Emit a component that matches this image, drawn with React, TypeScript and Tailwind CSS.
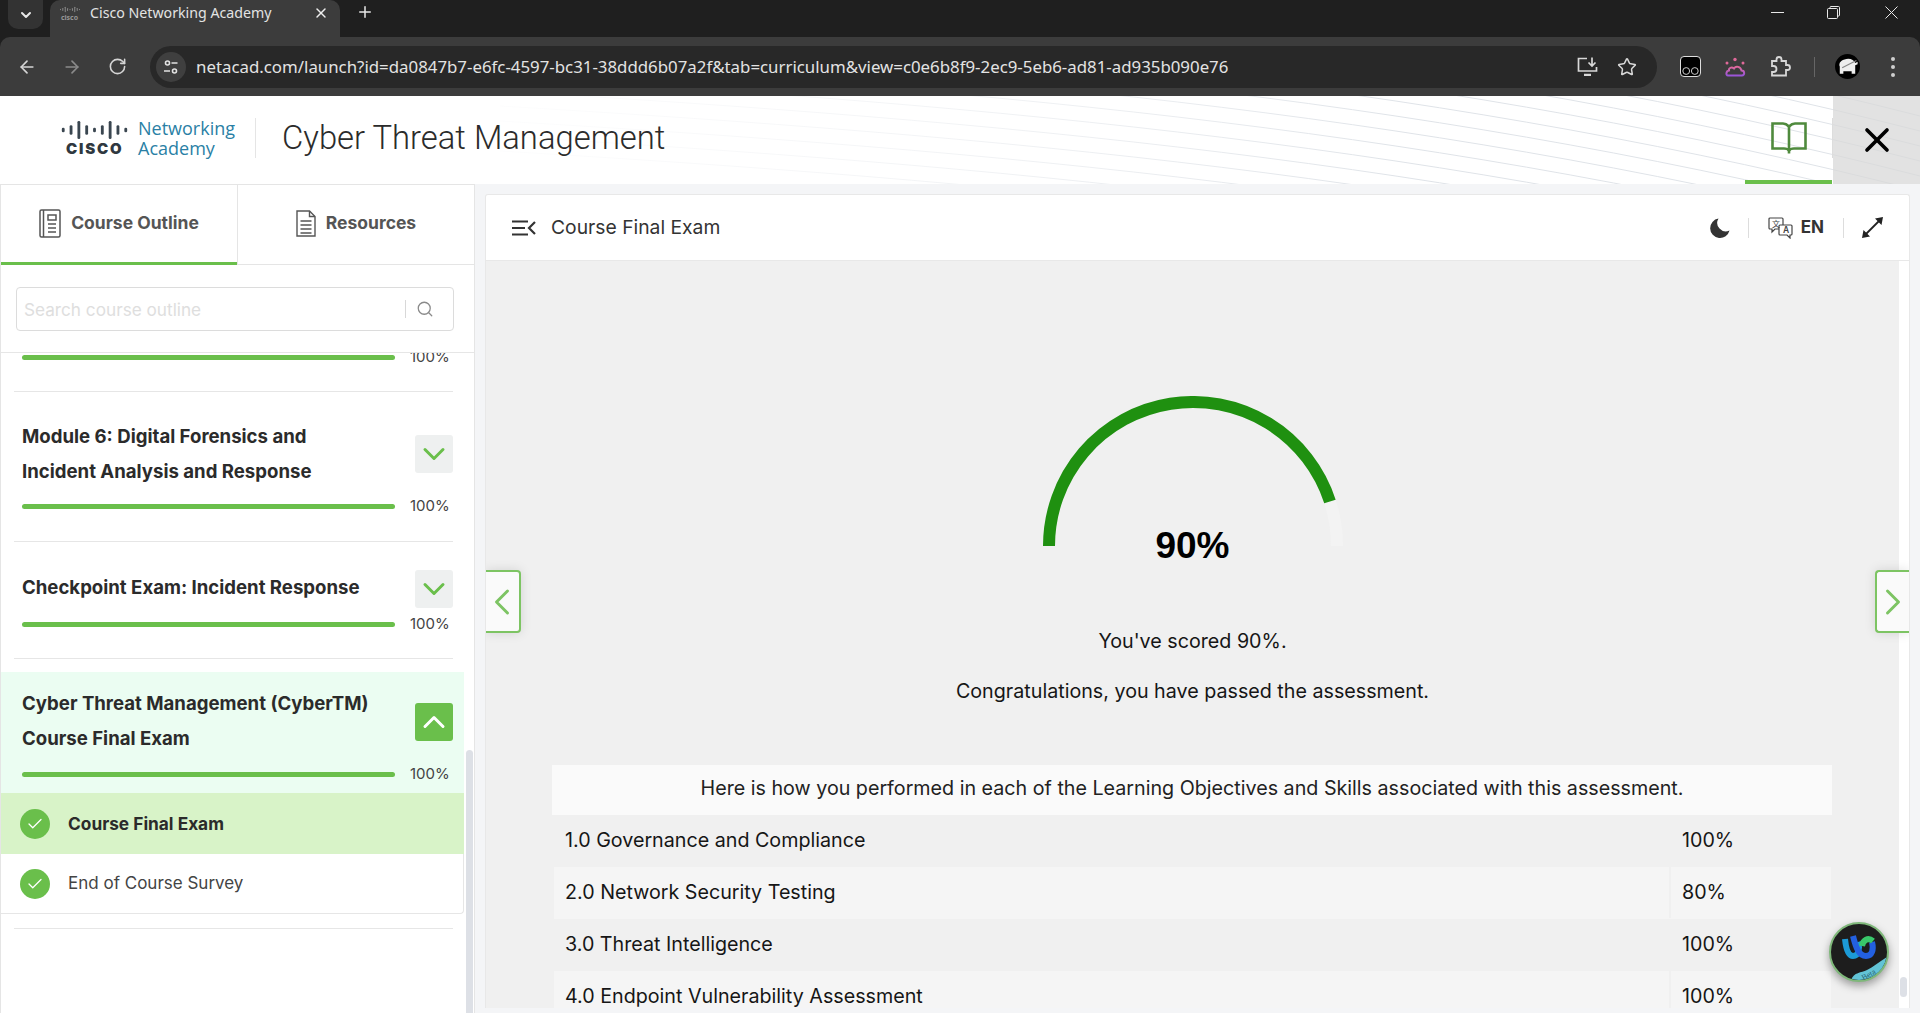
import React from "react";
import { ArrowLeft, ArrowRight, RotateCw, Star, X, Plus, ChevronDown, ChevronUp, ChevronLeft, ChevronRight, Search, Check } from "lucide-react";

function CiscoBars({ className, color }: { className: string; color: string }) {
  const h = [5, 10, 19, 10, 5, 10, 19, 10, 5];
  return (
    <svg className={className} viewBox="0 0 69 19" fill={color}>
      {[0, 8.25, 16.5, 24.75, 33, 41.25, 49.5, 57.75, 66].map((x, i) => (
        <rect key={i} x={x} y={(19 - h[i]) / 2} width="3" height={h[i]} rx="1.4" />
      ))}
    </svg>
  );
}

function OutlineIcon() {
  return (
    <svg width="22" height="29" viewBox="0 0 22 29" fill="none" stroke="#555" strokeWidth="1.5">
      <rect x="1" y="1" width="20" height="27" rx="1.5" />
      <path d="M4.5 1v27" />
      <rect x="9" y="6" width="8" height="5" />
      <path d="M9 15h8M9 19h8M9 23h8" />
    </svg>
  );
}

function ResourceIcon() {
  return (
    <svg width="20" height="27" viewBox="0 0 20 27" fill="none" stroke="#555" strokeWidth="1.4">
      <path d="M1 1h12.5L19 6.5V26H1z" />
      <path d="M13.5 1v5.5H19" />
      <path d="M4.5 11h11M4.5 15h11M4.5 19h11M4.5 23h11" />
    </svg>
  );
}

function BookIcon() {
  return (
    <svg width="36" height="32" viewBox="0 0 36 32" fill="none" stroke="#4f8a3d" strokeWidth="2.6">
      <path d="M18 4.500C16 2.500 14 1.500 12 1.500H1.500v25H13c2 0 4 .5 5 2 1-1.500 3-2 5-2h11.500v-25H24c-2 0-4 1-6 3z" />
      <path d="M18 4.500V31.500" />
    </svg>
  );
}

function Gauge() {
  return (
    <div className="relative mx-auto h-[150px] w-[300px]">
      <svg width="300" height="150" viewBox="0 0 300 150" fill="none" strokeWidth="12">
        <path d="M286.95 105.500A144 144 0 0 1 294 150" stroke="#f3f3f3" />
        <path d="M6 150A144 144 0 0 1 286.950 105.500" stroke="#1f9010" />
      </svg>
      <div className="absolute left-0 right-0 top-[132px] text-center font-['Liberation_Sans'] text-[37px] font-bold leading-[36px] text-black">90%</div>
    </div>
  );
}

function Bar({ pct, cls }: { pct: string; cls: string }) {
  return (
    <div className={"flex items-center " + cls}>
      <div className="ml-[21px] h-[5px] w-[373px] rounded-full bg-[#6abf4b]" />
      <span className="ml-[15px] text-[15px] leading-[20px] text-[#444]">{pct}</span>
    </div>
  );
}

function Toggle({ open }: { open?: boolean }) {
  return (
    <div className={"flex h-[38px] w-[38px] items-center justify-center rounded-[3px] " + (open ? "bg-[#6abf4b]" : "bg-[#eef0f0]")}>
      {open ? <ChevronUp size={36} color="#fff" strokeWidth={2} /> : <ChevronDown size={36} color="#6abf4b" strokeWidth={2} />}
    </div>
  );
}

function Title({ lines }: { lines: string[] }) {
  return (
    <div className="ml-[21px] text-[18.600px] font-bold leading-[35px] text-[#2b2b2b]">
      {lines.map((l) => (
        <div key={l}>{l}</div>
      ))}
    </div>
  );
}

function Divider() {
  return <div className="ml-[13px] h-px w-[439px] bg-[#e6e6e6]" />;
}

function CheckDot() {
  return (
    <div className="ml-[19px] flex h-[30px] w-[30px] items-center justify-center rounded-full bg-[#6abf4b]">
      <Check size={18} color="#fff" strokeWidth={1.7} />
    </div>
  );
}

function Row({ name, val, shade, cellLine }: { name: string; val: string; shade?: boolean; cellLine?: boolean }) {
  return (
    <div className={"flex h-[52px] w-[1277px] items-center pb-[2px] text-[19.700px] leading-[30px] text-[#161616] " + (shade ? "ml-[2px] bg-[#f5f5f5]" : "ml-[2px]")}>
      <div className="ml-[11px] w-[1104px]">{name}</div>
      <div className={"flex h-[52px] items-center pl-[11px] " + (cellLine ? "border-l-2 border-[#f0f0f0]" : "border-l-2 border-transparent")}>{val}</div>
    </div>
  );
}

export default function App() {
  const url = "netacad.com/launch?id=da0847b7-e6fc-4597-bc31-38ddd6b07a2f&tab=curriculum&view=c0e6b8f9-2ec9-5eb6-ad81-ad935b090e76";
  const waves = [-170, -155, -140, -125, -110, -95, -80, -65, -50, -35, -20, -5, 10, 25, 40, 55];
  return (
    <div className="flex h-[1013px] w-[1920px] flex-col overflow-hidden bg-[#1f1f1f] font-['Inter',sans-serif]">
      {/* tab strip */}
      <div className="flex h-[37px] shrink-0 items-start font-['Noto_Sans',sans-serif] text-[#e8e8e8]">
        <div className="ml-[8px] flex h-[29px] w-[35px] items-center justify-center rounded-b-[10px] bg-[#333]">
          <ChevronDown size={16} color="#e8e8e8" strokeWidth={3} />
        </div>
        <div className="ml-[7px] flex h-[37px] w-[290px] items-center rounded-t-[10px] bg-[#3c3c3c] pb-[11px]">
          <div className="ml-[9px] flex w-[21px] flex-col items-center opacity-70">
            <CiscoBars className="h-[9px] w-[20px]" color="#bbb" />
            <span className="text-[7px] font-bold leading-[7px] text-[#bbb]">cisco</span>
          </div>
          <span className="ml-[10px] w-[224px] text-[14.200px] leading-[20px] text-[#e3e3e3]">Cisco Networking Academy</span>
          <X size={16} color="#eee" strokeWidth={2.2} className="-ml-[1px]" />
        </div>
        <Plus size={18} color="#e8e8e8" strokeWidth={2} className="ml-[16px] mt-[3px]" />
        <div className="ml-auto flex h-[24px] items-center">
          <div className="mr-[43px] h-px w-[13px] bg-[#e8e8e8]" />
          <svg className="mr-[45px]" width="13" height="13" viewBox="0 0 13 13" fill="none" stroke="#e8e8e8" strokeWidth="1">
            <rect x="0.5" y="2.500" width="10" height="10" rx="1" />
            <path d="M3 2.500V1.500a1 1 0 0 1 1-1h7.500a1 1 0 0 1 1 1V9a1 1 0 0 1-1 1h-1" />
          </svg>
          <svg className="mr-[22px]" width="13" height="13" viewBox="0 0 13 13" fill="none" stroke="#e8e8e8" strokeWidth="1">
            <path d="M0.5 0.500L12.500 12.500M12.500 0.500L0.500 12.500" />
          </svg>
        </div>
      </div>

      {/* toolbar */}
      <div className="flex h-[59px] shrink-0 items-center rounded-t-[10px] bg-[#3c3c3c]">
        <ArrowLeft size={20} color="#d5d5d5" strokeWidth={2} className="ml-[17px]" />
        <ArrowRight size={20} color="#8a8a8a" strokeWidth={2} className="ml-[25px]" />
        <RotateCw size={19} color="#d5d5d5" strokeWidth={2} className="ml-[26px]" />
        <div className="ml-[23px] flex h-[42px] w-[1507px] items-center rounded-full bg-[#282828]">
          <div className="ml-[6px] flex h-[30px] w-[30px] items-center justify-center rounded-full bg-[#3f3f3f]">
            <svg width="16" height="16" viewBox="0 0 16 16" fill="none" stroke="#e3e3e3" strokeWidth="1.6">
              <circle cx="4.500" cy="4" r="2" />
              <path d="M8.500 4h6M1 12h6" />
              <circle cx="11.500" cy="12" r="2" />
            </svg>
          </div>
          <span className="ml-[10px] whitespace-nowrap font-['Noto_Sans',sans-serif] text-[16.840px] leading-[22px] text-[#e3e3e3]">{url}</span>
          <svg className="ml-auto" width="21" height="19" viewBox="0 0 21 19" fill="none" stroke="#d8d8d8" strokeWidth="1.7">
            <path d="M10 1.500H1.500v12.500h18V10" />
            <path d="M7 18h7" strokeWidth="2.500" />
            <path d="M15 0.500v8M11.500 5.500L15 9l3.500-3.500" />
          </svg>
          <Star size={20} color="#d8d8d8" strokeWidth={1.8} className="ml-[19px] mr-[20px]" />
        </div>
        <div className="ml-[23px] flex h-[21px] w-[21px] items-end justify-center rounded-[4px] border border-[#ddd] bg-black pb-[1px]">
          <svg width="17" height="8" viewBox="0 0 17 8" fill="none" stroke="#ccc" strokeWidth="1">
            <circle cx="4.200" cy="4" r="3.400" />
            <circle cx="12.800" cy="4" r="3.400" />
          </svg>
        </div>
        <svg className="ml-[23px]" width="22" height="20" viewBox="0 0 22 20" fill="none" strokeWidth="2">
          <defs>
            <linearGradient id="wx" x1="0" y1="0" x2="0" y2="1">
              <stop offset="0" stopColor="#e0699a" />
              <stop offset="1" stopColor="#9a55d8" />
            </linearGradient>
          </defs>
          <path d="M4 18.500h14c3 0 3-5-.5-5C16.500 9.500 12 8.500 10 11.500 7.500 9.500 4.500 11 5 13.500c-3 .5-3.500 5-1 5z" stroke="url(#wx)" />
          <circle cx="11" cy="2.500" r="1.700" fill="#e0699a" stroke="none" />
          <circle cx="3" cy="6" r="1.500" fill="#e0699a" stroke="none" />
          <circle cx="19" cy="6" r="1.500" fill="#e0699a" stroke="none" />
        </svg>
        <svg className="ml-[24px]" width="21" height="21" viewBox="0 0 21 21" fill="none" stroke="#d8d8d8" strokeWidth="1.8">
          <path d="M2 5h4.500V3.500a2.500 2.500 0 0 1 5 0V5H16v4h1.500a2 2 0 0 1 0 5H16v5.500H2v-3.500h1.500a2.500 2.500 0 0 0 0-6H2z" />
        </svg>
        <div className="ml-[23px] h-[20px] w-px bg-[#666]" />
        <div className="ml-[20px] flex h-[25px] w-[25px] items-center justify-center rounded-full bg-black">
          <svg width="23" height="19" viewBox="0 0 19 16">
            <path d="M3 14V8C2 6 3 3 7 2c4-1.500 8 0 9 3l2-1v2l-2 1v7h-3v-2H6v2z" fill="#eee" />
            <path d="M5 9l12-6" stroke="#888" strokeWidth="1" />
          </svg>
        </div>
        <div className="ml-[31px] flex flex-col gap-[4px]">
          <div className="h-[4px] w-[4px] rounded-full bg-[#cfcfcf]" />
          <div className="h-[4px] w-[4px] rounded-full bg-[#cfcfcf]" />
          <div className="h-[4px] w-[4px] rounded-full bg-[#cfcfcf]" />
        </div>
      </div>

      {/* course header */}
      <div className="relative flex h-[88px] shrink-0 items-center bg-white pb-[4px]">
        <svg className="absolute inset-0" width="1920" height="88" viewBox="0 0 1920 88" fill="none" stroke="url(#wave)" strokeWidth="1">
          <defs>
            <linearGradient id="wave" gradientUnits="userSpaceOnUse" x1="500" y1="0" x2="1400" y2="0">
              <stop offset="0" stopColor="#f4f5f7" stopOpacity="0.2" />
              <stop offset="1" stopColor="#dfe3e8" />
            </linearGradient>
          </defs>
          {waves.map((o) => (
            <path key={o} d={`M500 ${o}C1000 ${o + 30} 1450 ${o + 70} 1920 ${o + 190}`} />
          ))}
        </svg>
        <div className="relative ml-[60px] flex h-[36px] w-[70px] flex-col">
          <CiscoBars className="mt-[1px] h-[19px] w-[69px]" color="#3a4650" />
          <span className="mt-[2px] pl-[6px] text-[15px] font-black leading-[15px] tracking-[1.800px] text-[#2f3840]">CISCO</span>
        </div>
        <div className="relative ml-[8px] font-['Open_Sans'] text-[18px] leading-[20px] text-[#2a7fa5]">
          <div>Networking</div>
          <div>Academy</div>
        </div>
        <div className="relative ml-[20px] h-[40px] w-px bg-[#e5e5e5]" />
        <span className="relative ml-[26px] font-['Roboto'] text-[32.800px] font-light leading-[40px] text-[#2b2b2b]">Cyber Threat Management</span>
        <div className="relative -mb-[4px] ml-auto flex h-[88px] w-[87px] items-start justify-center border-b-[4px] border-b-[#6abf4b] pt-[26px]">
          <BookIcon />
        </div>
        <div className="relative h-[40px] w-px bg-[#ddd]" />
        <div className="relative -mb-[4px] flex h-[88px] w-[87px] items-center justify-center bg-[#d8d8d8]/75">
          <X size={40} color="#000" strokeWidth={2.2} />
        </div>
      </div>

      {/* body */}
      <div className="flex min-h-0 flex-1 bg-[#f4f5f7]">
        {/* sidebar */}
        <div className="flex w-[475px] shrink-0 flex-col border-x border-t border-[#e5e5e5] bg-white">
          <div className="flex h-[80px] shrink-0 border-b border-[#e5e5e5]">
            <div className="-mb-px flex w-[236px] items-center justify-center gap-[10px] border-b-[3px] border-[#6abf4b] pb-[1px]">
              <OutlineIcon />
              <span className="text-[17.500px] font-bold text-[#555]">Course Outline</span>
            </div>
            <div className="flex w-[237px] items-center justify-center gap-[10px] border-l border-[#e5e5e5] pb-[3px]">
              <ResourceIcon />
              <span className="text-[17.500px] font-bold text-[#555]">Resources</span>
            </div>
          </div>
          <div className="ml-[15px] mt-[22px] flex h-[44px] w-[438px] shrink-0 items-center rounded-[4px] border border-[#dcdcdc]">
            <span className="ml-[7px] pt-[1px] text-[17.200px] text-[#dedede]">Search course outline</span>
            <div className="ml-auto h-[18px] w-px bg-[#d8d8d8]" />
            <Search size={18} color="#8a8a8a" strokeWidth={1.7} className="ml-[10px] mr-[19px]" />
          </div>
          <div className="mt-[21px] flex min-h-0 flex-1 border-t border-[#e6e6e6]">
            <div className="w-[463px] shrink-0 overflow-hidden">
              <div className="h-[38px] pt-[1px]">
                <Bar pct="100%" cls="-mt-[7px]" />
              </div>
              <Divider />
              <div className="h-[149px]">
                <div className="flex items-start pt-[27px]">
                  <Title lines={["Module 6: Digital Forensics and", "Incident Analysis and Response"]} />
                  <div className="ml-auto mr-[11px] mt-[16px]"><Toggle /></div>
                </div>
                <Bar pct="100%" cls="mt-[7px]" />
              </div>
              <Divider />
              <div className="h-[116px]">
                <div className="flex items-start pt-[28px]">
                  <Title lines={["Checkpoint Exam: Incident Response"]} />
                  <div className="ml-auto mr-[11px]"><Toggle /></div>
                </div>
                <Bar pct="100%" cls="mt-[6px]" />
              </div>
              <Divider />
              <div className="mt-[13px] bg-[#ebfdf2] pb-[9px] pt-[14px]">
                <div className="flex items-start">
                  <Title lines={["Cyber Threat Management (CyberTM)", "Course Final Exam"]} />
                  <div className="ml-auto mr-[11px] mt-[17px]"><Toggle open /></div>
                </div>
                <Bar pct="100%" cls="mt-[8px]" />
              </div>
              <div className="flex h-[61px] items-center bg-[#d8f3c8]">
                <CheckDot />
                <span className="ml-[18px] text-[17.300px] font-bold text-[#2b2b2b]">Course Final Exam</span>
              </div>
              <div className="flex h-[60px] items-center rounded-br-[4px] border-b border-r border-[#e6e6e6]">
                <CheckDot />
                <span className="ml-[18px] text-[17px] text-[#444]">End of Course Survey</span>
              </div>
              <div className="mt-[14px]"><Divider /></div>
            </div>
            <div className="ml-[2px] mt-[397px] h-[300px] w-[7px] rounded-full bg-[#dde0e6]" />
          </div>
        </div>

        {/* main panel */}
        <div className="relative ml-[10px] mt-[10px] flex h-[814px] w-[1425px] shrink-0 flex-col overflow-hidden rounded-t-[3px] border-x border-t border-[#e8e8e8] bg-white">
          <div className="flex h-[66px] shrink-0 items-center border-b border-[#e8e8e8]">
            <svg className="ml-[26px]" width="24" height="16" viewBox="0 0 24 16" fill="none" stroke="#333" strokeWidth="2.200">
              <path d="M0 1.500h16M0 8h13M0 14.500h16M23 2l-6 6 6 6" />
            </svg>
            <span className="ml-[15px] pb-[2px] text-[19.300px] leading-[26px] text-[#333]">Course Final Exam</span>
            <svg className="ml-auto" width="20" height="20" viewBox="0 0 20 20" fill="#333">
              <path d="M8.500 0.500A9.800 9.800 0 1 0 19.500 12.500 8.500 8.500 0 0 1 8.500 0.500z" />
            </svg>
            <div className="ml-[18px] h-[20px] w-px bg-[#ddd]" />
            <svg className="ml-[19px]" width="26" height="22" viewBox="0 0 26 22" fill="none" stroke="#444" strokeWidth="1.200">
              <path d="M2 1h12a1 1 0 0 1 1 1v9a1 1 0 0 1-1 1H7l-3 3v-3H2a1 1 0 0 1-1-1V2a1 1 0 0 1 1-1z" fill="#fff" />
              <path d="M12 8h11a1 1 0 0 1 1 1v8a1 1 0 0 1-1 1h-1v3l-3-3h-7a1 1 0 0 1-1-1V9a1 1 0 0 1 1-1z" fill="#fff" />
              <text x="4" y="9.500" fontSize="8" fill="#444" stroke="none" fontFamily="Noto Sans CJK SC">文</text>
              <text x="15" y="16" fontSize="8.500" fill="#444" stroke="none" fontFamily="Inter" fontWeight="600">A</text>
            </svg>
            <span className="ml-[7px] text-[17px] font-bold text-[#333]">EN</span>
            <div className="ml-[19px] h-[20px] w-px bg-[#ddd]" />
            <svg className="ml-[18px] mr-[26px]" width="21" height="21" viewBox="0 0 21 21" fill="#222" stroke="none">
              <path d="M2.500 18.500L18.500 2.500" stroke="#222" strokeWidth="1.800" />
              <path d="M21 0l-8 1.500 6.500 6.500zM0 21l8-1.500-6.500-6.500z" />
            </svg>
          </div>
          <div className="flex min-h-0 flex-1">
            <div className="relative min-w-0 flex-1 overflow-hidden bg-[#f0f0f0]">
              <div className="pt-[135px]">
                <Gauge />
                <div className="mt-[80px] text-center text-[19.700px] leading-[30px] text-[#161616]">You've scored 90%.</div>
                <div className="mt-[20px] text-center text-[19.700px] leading-[30px] text-[#161616]">Congratulations, you have passed the assessment.</div>
                <div className="ml-[66px] mt-[59px] w-[1280px]">
                  <div className="flex h-[50px] items-center justify-center bg-[#fafafa] pb-[3px] text-[19.700px] text-[#222]">
                    Here is how you performed in each of the Learning Objectives and Skills associated with this assessment.
                  </div>
                  <Row name="1.0 Governance and Compliance" val="100%" />
                  <Row name="2.0 Network Security Testing" val="80%" shade cellLine />
                  <Row name="3.0 Threat Intelligence" val="100%" />
                  <Row name="4.0 Endpoint Vulnerability Assessment" val="100%" shade cellLine />
                </div>
              </div>
              {/* assistant bubble */}
              <div className="absolute bottom-[26px] right-[10px] h-[60px] w-[60px] overflow-hidden rounded-full border-2 border-[#7fb87a] bg-[#1d1d1d] shadow-[0_4px_8px_rgba(0,0,0,0.35)]">
                <svg width="56" height="56" viewBox="0 0 56 56" fill="none">
                  <path d="M14 15c1 10 3 17 8 17 6 0 7-8 5-14" stroke="#1c9ad6" strokeWidth="6" />
                  <path d="M22 12c3 12 6 20 13 20 6 0 8-6 6-14" stroke="#2360e0" strokeWidth="6" />
                  <path d="M31 22c1-6 6-9 11-5" stroke="#39c76a" strokeWidth="6" />
                  <path d="M20 56c3-8 10-7 16-10 6-3 12-8 20-13v23z" fill="#62c3d6" />
                  <text x="30" y="53" fontSize="8" fill="#25606e" fontFamily="Liberation Serif" transform="rotate(-30 38 50)">Beta</text>
                </svg>
              </div>
            </div>
            <div className="w-[10px] shrink-0 bg-white pl-[1px] pt-[716px]">
              <div className="h-[20px] w-[7px] rounded-full bg-[#dde0e6]" />
            </div>
          </div>
          {/* previous / next */}
          <div className="absolute left-0 top-[375px] flex h-[63px] w-[35px] items-center justify-center rounded-r-[4px] border-y-2 border-r-2 border-[#7dc463] bg-[#fafafa] pr-[2px] shadow-[0_0_12px_rgba(0,0,0,0.12)]">
            <ChevronLeft size={44} color="#7dc463" strokeWidth={1.6} className="shrink-0" />
          </div>
          <div className="absolute right-0 top-[375px] flex h-[63px] w-[34px] items-center justify-center rounded-l-[4px] border-y-2 border-l-2 border-[#7dc463] bg-[#fafafa] shadow-[0_0_12px_rgba(0,0,0,0.12)]">
            <ChevronRight size={44} color="#7dc463" strokeWidth={1.6} className="shrink-0" />
          </div>
        </div>
      </div>
    </div>
  );
}
